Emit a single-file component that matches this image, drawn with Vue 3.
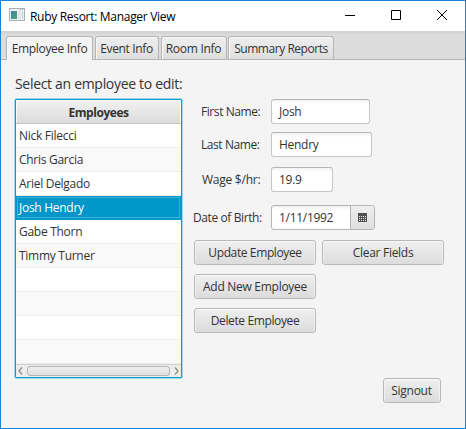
<script setup>
import { ref } from 'vue'

const tabs = [
  { label: 'Employee Info', cls: 'tab-employee' },
  { label: 'Event Info', cls: 'tab-event' },
  { label: 'Room Info', cls: 'tab-room' },
  { label: 'Summary Reports', cls: 'tab-summary' }
]
const activeTab = ref(0)
const rows = ['Nick Filecci', 'Chris Garcia', 'Ariel Delgado', 'Josh Hendry', 'Gabe Thorn', 'Timmy Turner', '', '', '', '']
const selected = ref(3)
</script>

<template>
  <div class="window">
    <header class="titlebar">
      <svg class="app-icon" width="16" height="14" viewBox="0 0 16 14">
        <defs>
          <linearGradient id="pane" x1="0" y1="0" x2="1" y2="1">
            <stop offset="0" stop-color="#3f7fa0" />
            <stop offset="1" stop-color="#48a878" />
          </linearGradient>
        </defs>
        <rect x="0.5" y="0.5" width="15" height="12" fill="#eef0f2" stroke="#a9aeb3" />
        <rect x="2" y="3" width="6" height="8" fill="url(#pane)" />
        <rect x="9" y="3" width="3" height="8" fill="#dfe4e8" />
        <rect x="13" y="3" width="1" height="8" fill="#c6ced4" />
        <rect x="11" y="1" width="1" height="1" fill="#a0a7ad" />
        <rect x="13" y="1" width="1" height="1" fill="#a0a7ad" />
      </svg>
      <h1 class="title">Ruby Resort: Manager View</h1>
      <div class="controls">
        <svg width="10" height="10" viewBox="0 0 10 10"><path d="M0 5.5H10" /></svg>
        <svg width="10" height="10" viewBox="0 0 10 10"><path d="M.5 .5H9.5V9.5H.5Z" /></svg>
        <svg width="10" height="10" viewBox="0 0 10 10"><path d="M0 0L10 10M10 0L0 10" /></svg>
      </div>
    </header>

    <nav class="tabs">
      <button
        v-for="(t, i) in tabs"
        :key="t.label"
        class="tab"
        :class="[t.cls, { active: i === activeTab }]"
        @click="activeTab = i"
      >{{ t.label }}</button>
    </nav>

    <main class="content">
      <section class="left">
        <p class="prompt">Select an employee to edit:</p>
        <div class="table">
          <div class="thead">Employees</div>
          <div
            v-for="(r, i) in rows"
            :key="i"
            class="row"
            :class="{ selected: i === selected }"
            @click="selected = i"
          >{{ r }}</div>
          <div class="scrollbar">
            <svg width="5" height="8" viewBox="0 0 5 8"><path d="M4 .5L1 4L4 7.5" /></svg>
            <div class="thumb"></div>
            <svg width="5" height="8" viewBox="0 0 5 8"><path d="M1 .5L4 4L1 7.5" /></svg>
          </div>
        </div>
      </section>

      <section class="right">
        <div class="field first"><label>First Name:</label><div class="input">Josh</div></div>
        <div class="field last"><label>Last Name:</label><div class="input">Hendry</div></div>
        <div class="field wage"><label>Wage $/hr:</label><div class="input">19.9</div></div>
        <div class="field dob">
          <label>Date of Birth:</label>
          <div class="input date">
            <span class="date-text">1/11/1992</span>
            <span class="picker">
              <svg width="9" height="9" viewBox="0 0 9 9" shape-rendering="crispEdges">
                <rect width="9" height="9" fill="#505050" />
                <path d="M1 3.5H8M1 5.5H8M1 7.5H8" stroke="#f0f0f0" stroke-dasharray="1 1" />
              </svg>
            </span>
          </div>
        </div>
        <div class="buttons">
          <button class="btn update">Update Employee</button>
          <button class="btn clear">Clear Fields</button>
          <button class="btn add">Add New Employee</button>
          <button class="btn delete">Delete Employee</button>
        </div>
        <button class="btn signout">Signout</button>
      </section>
    </main>
  </div>
</template>

<style>
body {
  margin: 0;
}
</style>

<style scoped>
* {
  box-sizing: border-box;
}

.window {
  display: flex;
  flex-direction: column;
  width: 466px;
  height: 429px;
  border: 1px solid #1883d7;
  background: #f4f4f4;
  font-family: "Open Sans", "Noto Sans", sans-serif;
  font-size: 12px;
  letter-spacing: -0.28px;
  color: #333;
  white-space: nowrap;
  overflow: hidden;
}

button {
  font: inherit;
  letter-spacing: inherit;
  color: inherit;
}

.titlebar {
  display: flex;
  align-items: center;
  height: 30px;
  flex: none;
  padding: 0 18px 0 8px;
  background: #fff;
}

.app-icon {
  margin-bottom: 2px;
}

.title {
  margin: 0 0 0 5px;
  font-size: 12px;
  font-weight: 400;
  letter-spacing: -0.3px;
  color: #000;
}

.controls {
  display: flex;
  gap: 36px;
  margin: 0 0 2px auto;
}

.controls path {
  fill: none;
  stroke: #000;
}

.tabs {
  display: flex;
  gap: 2px;
  height: 29px;
  flex: none;
  padding: 5px 0 0 5px;
  border-bottom: 1px solid #b5b5b5;
  background: linear-gradient(#cfcfcf, #dcdcdc 4px);
}

.tab {
  flex: none;
  height: 23px;
  padding: 0;
  border: 1px solid #b5b5b5;
  border-bottom: 0;
  border-radius: 3px 3px 0 0;
  background: linear-gradient(#efefef, #dedede);
  box-shadow: inset 1px 1px #f8f8f8;
  line-height: 23px;
}

.tab.active {
  height: 24px;
  background: #f4f4f4;
}

.tab-employee { width: 87px; letter-spacing: -0.34px; }
.tab-event { width: 64px; padding-right: 1px; letter-spacing: -0.36px; }
.tab-room { width: 66px; padding-right: 1px; }
.tab-summary { width: 106px; margin-left: -1px; letter-spacing: -0.46px; }

.content {
  display: flex;
  flex: 1;
  padding-left: 13px;
}

.left {
  width: 169px;
}

.prompt {
  margin: 13px 0 0 1px;
  height: 25px;
  font-size: 14px;
  line-height: 22px;
  letter-spacing: -0.31px;
}

.table {
  height: 279px;
  margin: 1px;
  border: 1px solid #0b9bc9;
  border-radius: 1px;
  outline: 1px solid #a5d8ea;
  background: #fff;
}

.thead {
  height: 24px;
  border-bottom: 1px solid #c4c4c4;
  background: linear-gradient(#f1f1f1, #dcdcdc);
  box-shadow: inset 1px 1px #fafafa, inset -1px 0 #fafafa;
  font-weight: 700;
  letter-spacing: -0.45px;
  line-height: 25px;
  text-align: center;
}

.row {
  height: 24px;
  padding-left: 3px;
  border-bottom: 1px solid #ededed;
  line-height: 24px;
}

.row:nth-child(odd) {
  background: #f9f9f9;
}

.row.selected {
  border-color: #0096c9;
  background: #0096c9;
  box-shadow: inset 0 0 0 1px #0096c9, inset 0 0 0 2px #3fb1d7;
  color: #fff;
}

.scrollbar {
  display: flex;
  align-items: center;
  justify-content: space-between;
  height: 13px;
  padding: 0 2px;
  border-top: 1px solid #d0d0d0;
  background: #ececec;
}

.scrollbar path {
  fill: none;
  stroke: #8c8c8c;
  stroke-width: 1.3;
}

.thumb {
  width: 143px;
  height: 10px;
  border: 1px solid #b5b5b5;
  border-radius: 3px;
  background: linear-gradient(#efefef, #dedede);
}

.right {
  flex: 1;
  padding: 39px 0 0 11px;
}

.field {
  display: flex;
  align-items: center;
  height: 25px;
}

.field label {
  width: 70px;
  margin-left: 7px;
  letter-spacing: -0.43px;
}

.last { margin-top: 8px; }
.wage { margin-top: 10px; }
.dob { margin-top: 13px; }

.field.wage label {
  width: 69px;
  margin-left: 8px;
  letter-spacing: -0.25px;
}

.field.dob label {
  width: 78px;
  margin-left: -1px;
  letter-spacing: -0.4px;
}

.input {
  height: 25px;
  padding-left: 7px;
  border: 1px solid #c6c6c6;
  border-top-color: #b5b5b5;
  border-radius: 3px;
  background: linear-gradient(#f2f2f2, #fff 4px);
  line-height: 24px;
}

.first .input { width: 99px; }
.last .input { width: 101px; }
.wage .input { width: 62px; }

.input.date {
  display: flex;
  width: 104px;
  border-color: #b5b5b5;
}

.date-text {
  width: 71px;
  letter-spacing: -0.3px;
}

.picker {
  display: grid;
  flex: 1;
  place-items: center;
  border-left: 1px solid #b5b5b5;
  border-radius: 0 2px 2px 0;
  background: linear-gradient(#efefef, #dedede);
}

.buttons {
  display: grid;
  grid-template-columns: 122px 122px;
  gap: 9px 6px;
  margin-top: 10px;
}

.btn {
  height: 25px;
  padding: 0;
  border: 1px solid #b8b8b8;
  border-radius: 3px;
  background: linear-gradient(#efefef, #dcdcdc);
  box-shadow: inset 0 1px #f9f9f9, inset 1px 0 #f1f1f1, inset -1px 0 #f1f1f1;
  line-height: 23px;
}

.update,
.delete {
  letter-spacing: -0.38px;
}

.add,
.delete {
  grid-column: 1;
}

.signout {
  display: block;
  width: 58px;
  margin: 45px 0 0 189px;
  padding-right: 1px;
}
</style>
